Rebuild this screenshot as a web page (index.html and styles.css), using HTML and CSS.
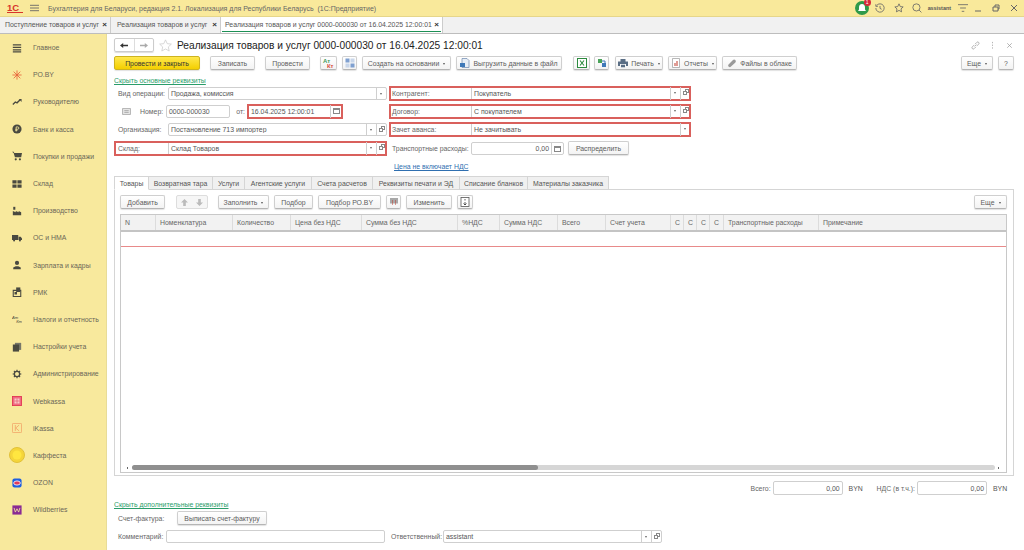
FILE: index.html
```html
<!DOCTYPE html>
<html lang="ru">
<head>
    <meta charset="UTF-8">
    <title>Реализация товаров и услуг</title>
    <link rel="stylesheet" href="styles.css">
</head>
<body>
    <header class="titlebar">
        <span class="logo">1С</span>
        <svg class="burger" viewBox="0 0 10 8"><path d="M0 1h10M0 4h10M0 7h10"/></svg>
        <span class="app-title">Бухгалтерия для Беларуси, редакция 2.1. Локализация для Республики Беларусь &nbsp;(1С:Предприятие)</span>
        <div class="sys">
            <span class="bell">
                <svg viewBox="0 0 14 14"><circle cx="7" cy="7" r="7" fill="#2f9a4a"/><path d="M7 3c-2 0-3 1.500-3 3.500v2l-1 1.500h8l-1-1.500v-2C10 4.500 9 3 7 3z" fill="#fff"/></svg>
                <span class="badge">1</span>
            </span>
            <svg class="sys-icon history" viewBox="0 0 12 12"><path d="M2 3a5 5 0 1 1-1 3M1 1.500V4h2.500M6 3.500V6.500l2 1"/></svg>
            <svg class="sys-icon star-s" viewBox="0 0 12 12"><path d="M6 1l1.500 3.300 3.500.4-2.600 2.400.7 3.500L6 8.900l-3.100 1.700.7-3.500L1 4.700l3.500-.4z"/></svg>
            <svg class="sys-icon search" viewBox="0 0 12 12"><circle cx="5.300" cy="5.300" r="4.300"/><path d="M8.500 8.500l2.800 2.800"/></svg>
            <span class="user">assistant</span>
            <svg class="sys-icon filter" viewBox="0 0 12 10"><path d="M0 1h12M2.500 5h7M4.500 9h3"/></svg>
            <svg class="sys-icon win-min" viewBox="0 0 8 8"><path d="M1 7h6"/></svg>
            <svg class="sys-icon win-max" viewBox="0 0 8 8"><path d="M1 3h5v4H1zM3 3V1h4v4H6"/></svg>
            <svg class="sys-icon win-close" viewBox="0 0 8 8"><path d="M1 1l6 6M7 1L1 7"/></svg>
        </div>
    </header>

    <nav class="open-tabs">
        <div class="open-tab tab-a">Поступление товаров и услуг<span class="x">×</span></div>
        <div class="open-tab tab-b">Реализация товаров и услуг<span class="x">×</span></div>
        <div class="open-tab tab-c active">Реализация товаров и услуг 0000-000030 от 16.04.2025 12:00:01<span class="x">×</span></div>
    </nav>

    <div class="main">
        <aside class="sidebar">
            <a class="side-item"><svg viewBox="0 0 12 12" class="ic"><path d="M1 1.500h10v1.500H1zM1 4.500h10V6H1zM1 7.500h10V9H1zM1 10h10v1.500H1z" fill="#4a4a40"/></svg>Главное</a>
            <a class="side-item"><svg viewBox="0 0 12 12" class="ic"><path d="M6 .5v11M.5 6h11M2 2l8 8M10 2l-8 8" stroke="#e8633a" stroke-width="1" fill="none"/></svg>РО.BY</a>
            <a class="side-item"><svg viewBox="0 0 12 12" class="ic"><path d="M1 9l3-3 2 1 3.500-3.500" stroke="#4a4a40" stroke-width="1.600" fill="none"/><path d="M8 2.500h3.500V6z" fill="#4a4a40"/></svg>Руководителю</a>
            <a class="side-item"><svg viewBox="0 0 12 12" class="ic"><circle cx="6" cy="6" r="5.500" fill="#4a4a40"/><path d="M5 9V3.500h1.800a1.400 1.400 0 0 1 0 2.800H4M4 7.600h2.500" stroke="#f8e99d" fill="none"/></svg>Банк и касса</a>
            <a class="side-item"><svg viewBox="0 0 12 12" class="ic"><path d="M0 1h2.200l.5 1.500H12l-1 5H3.500L2 2.500z" fill="#4a4a40"/><circle cx="4.500" cy="10" r="1.300" fill="#4a4a40"/><circle cx="9.500" cy="10" r="1.300" fill="#4a4a40"/></svg>Покупки и продажи</a>
            <a class="side-item"><svg viewBox="0 0 12 12" class="ic"><path d="M.5 1.500h5v4h-5zM6.500 1.500h5v4h-5zM.5 6.500h5v4h-5zM6.500 6.500h5v4h-5z" fill="#4a4a40"/></svg>Склад</a>
            <a class="side-item"><svg viewBox="0 0 12 12" class="ic"><path d="M1 11V6l3.500 1.500V6L8 7.500V6l3 1.500V11z" fill="#4a4a40"/><path d="M1.500 1h2.500v3.500H1.500z" fill="#4a4a40"/></svg>Производство</a>
            <a class="side-item"><svg viewBox="0 0 12 12" class="ic"><path d="M0 2.500h7.500v6H0zM8 4.500h2.500L12 6.500v2H8z" fill="#4a4a40"/><circle cx="2.500" cy="9" r="1.200" fill="#4a4a40"/><circle cx="9.500" cy="9" r="1.200" fill="#4a4a40"/></svg>ОС и НМА</a>
            <a class="side-item"><svg viewBox="0 0 12 12" class="ic"><circle cx="6" cy="3.500" r="2.500" fill="#4a4a40"/><path d="M1.500 11V9l3-1.500h3l3 1.500v2z" fill="#4a4a40"/></svg>Зарплата и кадры</a>
            <a class="side-item"><svg viewBox="0 0 12 12" class="ic"><path d="M1.500 4h9v7.500h-9z" fill="none" stroke="#4a4a40" stroke-width="1.300"/><path d="M5 .5h5V6H5z" fill="#4a4a40"/><path d="M3 6h3v3H3z" fill="#4a4a40"/></svg>РМК</a>
            <a class="side-item"><svg viewBox="0 0 12 12" class="ic"><text x="0" y="5.500" class="ic-text">Ат</text><text x="5" y="11" class="ic-text">Кт</text></svg>Налоги и отчетность</a>
            <a class="side-item"><svg viewBox="0 0 12 12" class="ic"><path d="M3.500 1h7.500v8.500H3.500z" fill="#77776a"/><path d="M1 3h7.500v8.500H1z" fill="#4a4a40"/></svg>Настройки учета</a>
            <a class="side-item"><svg viewBox="0 0 12 12" class="ic"><circle cx="6" cy="6" r="3.200" fill="none" stroke="#4a4a40" stroke-width="1.600"/><path d="M6 .8v2M6 9.200v2M.8 6h2M9.200 6h2M2.300 2.300l1.400 1.400M8.300 8.300l1.400 1.400M9.700 2.300L8.300 3.700M3.700 8.300L2.300 9.700" stroke="#4a4a40" stroke-width="1.400"/></svg>Администрирование</a>
            <a class="side-item"><svg viewBox="0 0 12 12" class="ic"><rect x=".5" y=".5" width="11" height="11" fill="#f06a80" stroke="#e0314f"/><path d="M3 3h6v6H3z" fill="#f8c8c8"/><path d="M6 3v6M3 6h6" stroke="#e0314f" stroke-width=".6"/></svg>Webkassa</a>
            <a class="side-item"><svg viewBox="0 0 12 12" class="ic"><rect x=".5" y=".5" width="11" height="11" rx="1" fill="none" stroke="#f2a468"/><path d="M4 2.500v7M8.500 2.500L4.500 6l4 3.500" fill="none" stroke="#f2a468"/></svg>iKassa</a>
            <a class="side-item"><svg viewBox="0 0 16 16" class="ic ic-big"><circle cx="8" cy="8" r="7.500" fill="#f5d53a" stroke="#e0c13a"/><circle cx="8" cy="8" r="4.500" fill="#ffe640"/></svg>Каффеста</a>
            <a class="side-item"><svg viewBox="0 0 12 12" class="ic"><rect width="11" height="11" x=".5" y=".5" rx="2.500" fill="#1f5fe0"/><ellipse cx="6" cy="6" rx="4" ry="2.500" fill="#e23a5a" stroke="#fff"/></svg>OZON</a>
            <a class="side-item"><svg viewBox="0 0 12 12" class="ic"><rect width="11" height="11" x=".5" y=".5" fill="#8a2a94"/><path d="M2.500 3.500l1.500 5 2-4 2 4 1.500-5" fill="none" stroke="#f4e6a0" stroke-width="1"/></svg>Wildberries</a>
        </aside>

        <section class="content">
            <div class="head-row">
                <div class="nav-btns">
                    <span class="nav-b"><svg viewBox="0 0 10 8"><path d="M0 4l4-3v2h6v2H4v2z" fill="#333"/></svg></span>
                    <span class="nav-b"><svg viewBox="0 0 10 8"><path d="M10 4L6 1v2H0v2h6v2z" fill="#aaa"/></svg></span>
                </div>
                <svg class="fav" viewBox="0 0 12 12"><path d="M6 .8l1.600 3.500 3.800.4-2.800 2.600.8 3.800L6 9.200l-3.400 1.900.8-3.800L.6 4.700l3.800-.4z"/></svg>
                <h1>Реализация товаров и услуг 0000-000030 от 16.04.2025 12:00:01</h1>
                <div class="head-right">
                    <svg viewBox="0 0 10 10" class="head-ic"><path d="M4 6l2-2M3.500 4.500L1.500 6.500a1.400 1.400 0 0 0 2 2l2-2M6.500 5.500l2-2a1.400 1.400 0 0 0-2-2l-2 2"/></svg>
                    <svg viewBox="0 0 10 10" class="head-ic dots"><path d="M5 1v1.500M5 4v1.500M5 7v1.500"/></svg>
                    <svg viewBox="0 0 10 10" class="head-ic"><path d="M2.500 2.500l5 5M7.500 2.500l-5 5"/></svg>
                </div>
            </div>

            <div class="toolbar">
                <button class="btn primary w-post-close">Провести и закрыть</button>
                <button class="btn w-save">Записать</button>
                <button class="btn w-post">Провести</button>
                <button class="btn w-dtkt"><svg viewBox="0 0 12 10"><text x="1" y="4.500" class="dt">Ат</text><text x="4.500" y="9.500" class="kt">Кт</text></svg></button>
                <button class="btn w-struct"><svg viewBox="0 0 10 10"><path d="M.5.500h4v4h-4zM5.500 5.500h4v4h-4z" fill="#7fa0d0"/><path d="M5.500.5h4v4h-4zM.5 5.500h4v4h-4z" fill="#c8d6ea"/></svg></button>
                <button class="btn w-create">Создать на основании<span class="caret"></span></button>
                <button class="btn w-export"><svg viewBox="0 0 10 10"><path d="M2 .5h5l2 2v7H2z" fill="#e8eef6" stroke="#6a86ad" stroke-width=".7"/><path d="M0 5h5v4H0z" fill="#3f79b8"/></svg>Выгрузить данные в файл</button>
                <button class="btn w-excel"><svg viewBox="0 0 10 10"><rect x=".5" y=".5" width="9" height="9" fill="#fff" stroke="#2c8a3e"/><path d="M3 2.500l4 5M7 2.500l-4 5" stroke="#2c8a3e" stroke-width="1.100"/></svg></button>
                <button class="btn w-mail"><svg viewBox="0 0 10 10"><rect x="1" y="1" width="4" height="4" fill="#4aa35a"/><rect x="5" y="5" width="4" height="4" fill="#3f79b8"/><path d="M5 3h3v2" stroke="#3f79b8" fill="none"/></svg></button>
                <button class="btn w-print"><svg viewBox="0 0 10 10"><path d="M2.500 1h5v2.500h-5zM0 3.500h10V8H8V6H2v2H0zM3 6.800h4v2.500H3z" fill="#5a6e85"/></svg>Печать<span class="caret"></span></button>
                <button class="btn w-reports"><svg viewBox="0 0 10 10"><path d="M1.500.5h7v9h-7z" fill="#fff" stroke="#999" stroke-width=".7"/><path d="M3.500 5h1v3h-1zM5.500 3h1v5h-1z" fill="#c0392b"/></svg>Отчеты<span class="caret"></span></button>
                <button class="btn w-files"><svg viewBox="0 0 10 10"><path d="M1.500 6.500L6 2a1.700 1.700 0 0 1 2.400 2.400L4 8.500a1.500 1.500 0 0 1-2.500-2z" fill="#9a9a9a"/></svg>Файлы в облаке</button>
                <span class="spacer"></span>
                <button class="btn w-more">Еще<span class="caret"></span></button>
                <button class="btn w-help">?</button>
            </div>

            <a class="link green link-main">Скрыть основные реквизиты</a>

            <div class="form">
                <div class="form-row">
                    <div class="cell-left field">
                        <label class="lab">Вид операции:</label>
                        <div class="input grow"><span class="val">Продажа, комиссия</span><span class="drop"></span></div>
                    </div>
                    <div class="cell-right field req">
                        <label class="lab lab-r">Контрагент:</label>
                        <div class="input grow"><span class="val">Покупатель</span><span class="drop"></span><span class="open"></span></div>
                    </div>
                </div>
                <div class="form-row">
                    <div class="cell-left field">
                        <svg class="doc-ic" viewBox="0 0 10 8"><path d="M.5.500h9v7h-9z" fill="#e6e6e6" stroke="#aaa"/><path d="M2.500 3h5M2.500 5h5" stroke="#888" stroke-width=".7"/></svg>
                        <label class="lab lab-num">Номер:</label>
                        <div class="input num-input"><span class="val">0000-000030</span></div>
                        <label class="lab lab-from">от:</label>
                        <div class="req date-box"><div class="input grow"><span class="val">16.04.2025 12:00:01</span><span class="cal"></span></div></div>
                    </div>
                    <div class="cell-right field req">
                        <label class="lab lab-r">Договор:</label>
                        <div class="input grow"><span class="val">С покупателем</span><span class="drop"></span><span class="open"></span></div>
                    </div>
                </div>
                <div class="form-row">
                    <div class="cell-left field">
                        <label class="lab">Организация:</label>
                        <div class="input grow"><span class="val">Постановление 713 импортер</span><span class="drop"></span><span class="open"></span></div>
                    </div>
                    <div class="cell-right field req">
                        <label class="lab lab-r">Зачет аванса:</label>
                        <div class="input grow"><span class="val">Не зачитывать</span><span class="drop"></span></div>
                    </div>
                </div>
                <div class="form-row">
                    <div class="cell-left field req stock">
                        <label class="lab">Склад:</label>
                        <div class="input grow"><span class="val">Склад Товаров</span><span class="drop"></span><span class="open"></span></div>
                    </div>
                    <div class="cell-right field plain-right">
                        <label class="lab lab-r">Транспортные расходы:</label>
                        <div class="input cost-input"><span class="val right">0,00</span><span class="cal"></span></div>
                        <button class="btn w-distribute">Распределить</button>
                    </div>
                </div>
            </div>

            <a class="link blue link-price">Цена не включает НДС</a>

            <div class="doc-tabs">
                <span class="doc-tab current t1">Товары</span>
                <span class="doc-tab t2">Возвратная тара</span>
                <span class="doc-tab t3">Услуги</span>
                <span class="doc-tab t4">Агентские услуги</span>
                <span class="doc-tab t5">Счета расчетов</span>
                <span class="doc-tab t6">Реквизиты печати и ЭД</span>
                <span class="doc-tab t7">Списание бланков</span>
                <span class="doc-tab t8">Материалы заказчика</span>
            </div>
            <div class="panel">
                <div class="panel-bar">
                    <button class="btn w-add">Добавить</button>
                    <div class="updown">
                        <span><svg viewBox="0 0 8 8"><path d="M4 0l4 4H5.500v4h-3V4H0z" fill="#bbb"/></svg></span>
                        <span><svg viewBox="0 0 8 8"><path d="M4 8l4-4H5.500V0h-3v4H0z" fill="#bbb"/></svg></span>
                    </div>
                    <button class="btn w-fill">Заполнить<span class="caret"></span></button>
                    <button class="btn w-pick">Подбор</button>
                    <button class="btn w-pickpo">Подбор РО.BY</button>
                    <button class="btn w-ic"><svg viewBox="0 0 10 10"><path d="M1 1h8v5.500H1z" fill="#a8a8a8"/><path d="M3 3h1v5H3zM6 3h1v5H6z" fill="#c0392b" opacity=".5"/></svg></button>
                    <button class="btn w-change">Изменить</button>
                    <button class="btn w-ic2"><svg viewBox="0 0 10 10"><rect x="1" y=".5" width="8" height="9" fill="#fff" stroke="#555" stroke-width=".8"/><path d="M5 2v1.500M5 5v3M3.500 6.500L5 8l1.500-1.500" stroke="#333" fill="none" stroke-width=".8"/></svg></button>
                    <span class="spacer"></span>
                    <button class="btn w-more-t">Еще<span class="caret"></span></button>
                </div>
                <div class="grid">
                    <div class="grid-head">
                        <span>N</span><span>Номенклатура</span><span>Количество</span><span>Цена без НДС</span><span>Сумма без НДС</span><span>%НДС</span><span>Сумма НДС</span><span>Всего</span><span>Счет учета</span><span>С</span><span>С</span><span>С</span><span>С</span><span>Транспортные расходы</span><span>Примечание</span>
                    </div>
                    <div class="grid-row"></div>
                    <div class="grid-empty"></div>
                    <div class="scroll">
                        <span class="arrow-l"></span>
                        <div class="track"><div class="thumb"></div></div>
                        <span class="arrow-r"></span>
                    </div>
                </div>
            </div>

            <div class="totals">
                <label class="lab">Всего:</label>
                <div class="input total"><span class="val right">0,00</span></div>
                <span class="cur">BYN</span>
                <label class="lab lab-vat">НДС (в т.ч.):</label>
                <div class="input total"><span class="val right">0,00</span></div>
                <span class="cur">BYN</span>
            </div>

            <a class="link green link-extra">Скрыть дополнительные реквизиты</a>

            <div class="invoice-row">
                <label class="lab lab-inv">Счет-фактура:</label>
                <button class="btn w-invoice">Выписать счет-фактуру</button>
            </div>
            <div class="comment-row">
                <label class="lab lab-comm">Комментарий:</label>
                <div class="input comment"></div>
                <label class="lab lab-resp">Ответственный:</label>
                <div class="input resp"><span class="val">assistant</span><span class="drop"></span><span class="open"></span></div>
            </div>
        </section>
    </div>
</body>
</html>
```

FILE: styles.css
```css
*, *::before, *::after {
    box-sizing: border-box;
}
html, body {
    margin: 0;
    height: 550px;
    overflow: hidden;
}
body {
    font-family: "Liberation Sans", Arial, sans-serif;
    font-size: 6.9px;
    color: #555;
    background: #fff;
    display: flex;
    flex-direction: column;
}

/* top bar */
.titlebar {
    height: 17px;
    flex: none;
    display: flex;
    align-items: center;
    background: #f9e99b;
    border-bottom: 1px solid #e6d68a;
    padding-left: 7px;
}
.logo {
    width: 16px;
    font-size: 9.5px;
    font-weight: bold;
    color: #d8342c;
    border-bottom: 1px solid #d8342c;
    line-height: 8px;
}
.burger {
    width: 9px;
    height: 8px;
    margin-left: 7px;
    stroke: #666;
    fill: none;
    stroke-width: 1;
}
.app-title {
    margin-left: 9px;
    color: #666;
    font-size: 7px;
}
.sys {
    margin-left: auto;
    display: flex;
    align-items: center;
    height: 16px;
}
.bell {
    position: relative;
    width: 14px;
    height: 14px;
    margin-right: 6px;
}
.bell svg {
    display: block;
}
.badge {
    position: absolute;
    top: -2px;
    right: -2px;
    width: 7px;
    height: 7px;
    border-radius: 50%;
    background: #d9283a;
    color: #fff;
    font-size: 5px;
    line-height: 7px;
    text-align: center;
}
.sys-icon {
    width: 10px;
    height: 10px;
    fill: none;
    stroke: #666;
    stroke-width: 1;
}
.history {
    margin-right: 9px;
}
.star-s {
    margin-right: 8px;
}
.search {
    margin-right: 6px;
}
.user {
    font-size: 5.4px;
    font-weight: bold;
    color: #555;
    margin-right: 7px;
}
.filter {
    margin-right: 6px;
}
.win-min, .win-max {
    width: 8px;
    height: 8px;
    margin-right: 10px;
}
.win-close {
    width: 8px;
    height: 8px;
    margin-right: 6px;
}

/* open documents */
.open-tabs {
    height: 17px;
    flex: none;
    display: flex;
    background: #f1f1f1;
    border-bottom: 1px solid #bdbdbd;
}
.open-tab {
    position: relative;
    height: 16px;
    line-height: 15px;
    padding-left: 5px;
    border-right: 1px solid #ccc;
    background: #f1f1f1;
    white-space: nowrap;
    color: #555;
}
.tab-a { width: 111px; }
.tab-b { width: 110px; padding-left: 6px; }
.tab-c { width: 222px; padding-left: 4px; }
.open-tab.active {
    background: #fff;
}
.open-tab.active::after {
    content: "";
    position: absolute;
    left: 1px;
    right: 1px;
    bottom: 1px;
    height: 1px;
    background: #1c8f55;
}
.x {
    position: absolute;
    right: 3px;
    top: 0;
    font-size: 8px;
    color: #333;
    font-weight: bold;
}

.main {
    flex: 1;
    display: flex;
    min-height: 0;
}

/* sections panel */
.sidebar {
    width: 107px;
    flex: none;
    background: #f8e99d;
    border-right: 1px solid #e8dc98;
}
.side-item {
    height: 27.2px;
    display: flex;
    align-items: center;
    position: relative;
    padding-left: 33px;
    color: #6a6658;
}
.ic {
    position: absolute;
    left: 12px;
    top: 50%;
    width: 10px;
    height: 10px;
    margin-top: -5px;
}
.ic-big {
    left: 9px;
    width: 16px;
    height: 16px;
    margin-top: -8px;
}
.ic-text {
    font-size: 5px;
    fill: #4a4a40;
    font-style: italic;
}

/* document */
.content {
    flex: 1;
    min-width: 0;
    padding: 4px 10px 0 7px;
    display: flex;
    flex-direction: column;
}
.head-row {
    height: 14px;
    display: flex;
    align-items: center;
}
.nav-btns {
    display: flex;
    width: 40px;
    height: 14px;
    border: 1px solid #ccc;
    border-radius: 2px;
    box-shadow: 0 1px 1px #ddd;
}
.nav-b {
    flex: 1;
    display: flex;
    align-items: center;
    justify-content: center;
}
.nav-b + .nav-b {
    border-left: 1px solid #ddd;
}
.nav-b svg {
    width: 8px;
    height: 7px;
}
.fav {
    width: 13px;
    height: 13px;
    margin-left: 5px;
    fill: #fff;
    stroke: #ccc;
    stroke-width: .7;
}
h1 {
    margin: 0 0 0 5px;
    font-size: 10.2px;
    font-weight: normal;
    color: #222;
    white-space: nowrap;
}
.head-right {
    margin-left: auto;
    display: flex;
    align-items: center;
}
.head-ic {
    width: 9px;
    height: 9px;
    margin-left: 8px;
    fill: none;
    stroke: #999;
    stroke-width: .8;
}

.toolbar {
    height: 15px;
    margin-top: 4px;
    display: flex;
}
.btn {
    height: 14px;
    padding: 0;
    font-family: inherit;
    font-size: 6.9px;
    color: #5c5c5c;
    background: linear-gradient(#fff, #f3f3f3);
    border: 1px solid #cfcfcf;
    border-bottom-color: #b5b5b5;
    border-radius: 2px;
    box-shadow: 0 1px 1px #e2e2e2;
    margin-right: 5px;
    white-space: nowrap;
    display: flex;
    align-items: center;
    justify-content: center;
}
.btn svg {
    width: 10px;
    height: 10px;
    flex: none;
}
.primary {
    background: linear-gradient(#ffe84d, #f4cf00);
    border-color: #cdb320;
    color: #333;
}
.spacer {
    flex: 1;
}
.caret {
    width: 0;
    height: 0;
    margin-left: 4px;
    margin-top: 1px;
    border: 1.5px solid transparent;
    border-top: 2px solid #555;
    border-bottom: 0;
    box-sizing: content-box;
}
.w-post-close { width: 86px; margin-right: 10px; }
.w-save { width: 45px; margin-right: 10px; }
.w-post { width: 45px; margin-right: 10px; }
.w-dtkt { width: 17px; }
.w-dtkt svg { width: 13px; height: 11px; }
.w-struct { width: 15px; }
.w-create { width: 89px; }
.w-export { width: 106px; margin-right: 11px; }
.w-export svg { margin-right: 3px; }
.w-excel { width: 17px; margin-right: 4px; }
.w-mail { width: 15px; margin-right: 6px; }
.w-print { width: 48px; }
.w-print svg, .w-reports svg, .w-files svg { margin-right: 3px; }
.w-reports { width: 49px; }
.w-files { width: 75px; }
.w-more { width: 32px; }
.w-help { width: 16px; margin-right: 0; }
.dt { font-size: 5.5px; font-weight: bold; fill: #3d9a5a; }
.kt { font-size: 5.5px; font-weight: bold; fill: #d84a3a; }

.link {
    text-decoration: underline;
    white-space: nowrap;
}
.green { color: #2a9d6a; }
.blue { color: #2f6fb0; }
.link-main {
    margin-top: 5px;
    height: 9px;
    line-height: 9px;
}

.form {
    margin-top: -1px;
}
.form-row {
    display: flex;
    height: 18.3px;
    align-items: center;
}
.cell-left {
    width: 273px;
    margin-right: 2px;
}
.cell-right {
    width: 302px;
}
.field {
    display: flex;
    align-items: center;
    height: 15px;
    padding-left: 4px;
}
.lab {
    white-space: nowrap;
    color: #666;
    flex: none;
    width: 50px;
}
.lab-r {
    width: 79px;
}
.req {
    outline: 2px solid #d9605c;
    outline-offset: -2px;
    padding-left: 3px;
    padding-right: 1px;
}
.plain-right {
    padding-left: 3px;
}
.stock {
    padding-left: 4px;
}
.input {
    height: 13px;
    display: flex;
    align-items: center;
    border: 1px solid #cfcfcf;
    border-radius: 2px;
    background: #fff;
    min-width: 0;
}
.grow {
    flex: 1;
}
.req .input {
    border-radius: 0;
    border-width: 0 0 0 1px;
}
.val {
    flex: 1;
    padding-left: 2px;
    color: #555;
    white-space: nowrap;
    overflow: hidden;
}
.val.right {
    text-align: right;
    padding-right: 2px;
}
.drop, .open, .cal {
    position: relative;
    height: 100%;
    flex: none;
    border-left: 1px solid #cfcfcf;
}
.drop { width: 10px; }
.open { width: 10px; }
.cal { width: 12px; }
.drop::after {
    content: "";
    position: absolute;
    left: 3px;
    top: 5px;
    box-sizing: content-box;
    border: 1.5px solid transparent;
    border-top: 2px solid #666;
    border-bottom: 0;
}
.open::before {
    content: "";
    position: absolute;
    left: 4px;
    top: 2px;
    width: 4px;
    height: 4px;
    border: 1px solid #888;
}
.open::after {
    content: "";
    position: absolute;
    left: 2px;
    top: 4px;
    width: 4px;
    height: 4px;
    background: #fff;
    border: 1px solid #888;
}
.cal::after {
    content: "";
    position: absolute;
    left: 2px;
    top: 3px;
    width: 7px;
    height: 6px;
    border: 1px solid #888;
    border-top-width: 2px;
}
.doc-ic {
    width: 9px;
    height: 7px;
    margin-left: 4px;
    flex: none;
}
.lab-num {
    width: 26px;
    margin-left: 9px;
}
.num-input {
    width: 64px;
    flex: none;
}
.lab-from {
    width: 17px;
    text-align: right;
    padding-right: 2px;
}
.date-box {
    width: 96px;
    height: 15px;
    padding: 1px 1px 1px 2px;
    display: flex;
    align-items: center;
    flex: none;
}
.date-box .input {
    border-left: 0;
}
.cost-input {
    width: 93px;
    flex: none;
}
.w-distribute {
    width: 61px;
    margin-left: 4px;
    margin-right: 0;
}
.link-price {
    margin-top: 5px;
    margin-left: 280px;
    height: 9px;
    line-height: 9px;
}

/* document tabs */
.doc-tabs {
    margin-top: 5px;
    display: flex;
    height: 14px;
}
.doc-tab {
    height: 14px;
    line-height: 13px;
    text-align: center;
    background: #f0f0f0;
    border: 1px solid #d5d5d5;
    border-left: 0;
    white-space: nowrap;
    color: #555;
}
.doc-tab.current {
    background: #fff;
    border-bottom-color: #fff;
    border-left: 1px solid #d5d5d5;
    position: relative;
    z-index: 1;
}
.t1 { width: 35px; }
.t2 { width: 64px; }
.t3 { width: 32px; }
.t4 { width: 67px; }
.t5 { width: 61px; }
.t6 { width: 87px; }
.t7 { width: 68px; }
.t8 { width: 81px; }

.panel {
    height: 287px;
    margin-top: -1px;
    border: 1px solid #d5d5d5;
    padding: 5px 6px 2px 5px;
    display: flex;
    flex-direction: column;
}
.panel-bar {
    height: 14px;
    display: flex;
    flex: none;
}
.w-add { width: 45px; margin-right: 11px; }
.updown {
    width: 32px;
    height: 14px;
    margin-right: 10px;
    display: flex;
    border: 1px solid #ddd;
    border-radius: 2px;
    background: #f6f6f6;
}
.updown span {
    flex: 1;
    display: flex;
    align-items: center;
    justify-content: center;
}
.updown svg {
    width: 7px;
    height: 7px;
}
.w-fill { width: 51px; }
.w-pick { width: 39px; }
.w-pickpo { width: 63px; }
.w-ic { width: 15px; }
.w-change { width: 46px; }
.w-ic2 { width: 16px; }
.w-more-t { width: 33px; margin-right: 0; }

.grid {
    flex: 1;
    margin-top: 5px;
    border: 1px solid #c8c8c8;
    display: flex;
    flex-direction: column;
    min-height: 0;
}
.grid-head, .grid-row {
    flex: none;
}
.grid-head {
    height: 17px;
    display: grid;
    grid-template-columns: 35px 77px 58px 71px 96px 42px 58px 48px 65px 13px 13px 13px 14px 95px 1fr;
    background: #f2f2f2;
    border-bottom: 2px solid #c4c4c4;
}
.grid-head span {
    padding-left: 4px;
    line-height: 15px;
    color: #666;
    border-right: 1px solid #dcdcdc;
    overflow: hidden;
    white-space: nowrap;
}
.grid-head span:last-child {
    border-right: 0;
}
.grid-row {
    height: 15px;
    border-bottom: 1px solid #e88a8a;
}
.grid-empty {
    flex: 1;
}
.scroll {
    height: 9px;
    flex: none;
    display: flex;
    align-items: center;
    padding: 0 3px;
}
.arrow-l, .arrow-r {
    width: 8px;
    flex: none;
    position: relative;
    height: 5px;
}
.arrow-l::after, .arrow-r::after {
    content: "";
    position: absolute;
    left: 3px;
    top: 2px;
    width: 1px;
    height: 2px;
    background: #666;
}
.track {
    flex: 1;
    height: 5px;
    background: #d6d6d6;
    border-radius: 3px;
}
.thumb {
    width: 47%;
    height: 5px;
    border-radius: 3px;
    background: #8f8f8f;
}

.totals {
    height: 14px;
    margin-top: 5px;
    display: flex;
    align-items: center;
    justify-content: flex-end;
    padding-right: 7px;
}
.totals .lab {
    width: auto;
    margin-right: 2px;
}
.total {
    width: 70px;
    height: 14px;
}
.cur {
    width: 14px;
    margin-left: 6px;
}
.totals .lab-vat {
    margin-left: 14px;
}
.link-extra {
    margin-top: 5px;
    height: 9px;
    line-height: 9px;
}
.invoice-row {
    height: 14px;
    margin-top: 2px;
    display: flex;
    align-items: center;
}
.lab-inv {
    width: 59px;
    margin-left: 4px;
}
.w-invoice {
    width: 90px;
}
.comment-row {
    height: 14px;
    margin-top: 4px;
    display: flex;
    align-items: center;
}
.lab-comm {
    width: 48px;
    margin-left: 4px;
}
.comment {
    width: 219px;
    flex: none;
}
.lab-resp {
    width: 52px;
    margin-left: 6px;
}
.resp {
    width: 219px;
    flex: none;
}
```
